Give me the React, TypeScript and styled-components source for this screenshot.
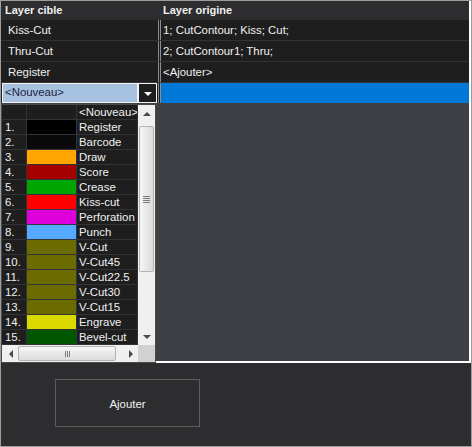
import styled, { createGlobalStyle } from "styled-components";

const GlobalStyle = createGlobalStyle`
  html, body {
    margin: 0;
    padding: 0;
    background: #2d2d30;
  }
  * {
    box-sizing: border-box;
  }
`;

const Window = styled.div`
  width: 472px;
  height: 447px;
  border: 1px solid #9d9d9d;
  background-color: #2d2d30;
  display: flex;
  flex-direction: column;
  font-family: "Liberation Sans", Arial, sans-serif;
  font-size: 11px;
  color: #f0f0f0;
  overflow: hidden;
`;

const GridPanel = styled.div`
  position: relative;
  height: 362px;
  flex-shrink: 0;
  background-color: #3f3f46;
  border-right: 2px solid #ffffff;
  border-bottom: 2px solid #ffffff;
`;

const HeaderRow = styled.div`
  display: grid;
  grid-template-columns: 157px 1fr;
  height: 19px;
  background-color: #2d2d30;
  font-weight: bold;
  span {
    padding-left: 4px;
    line-height: 19px;
  }
  span:last-child {
    padding-left: 5px;
  }
`;

const Row = styled.div`
  display: grid;
  grid-template-columns: 157px 3px 1fr;
  height: 21px;
  background-color: #1e1e1e;
  border-bottom: 1px solid #333337;
`;

const Cell = styled.div<{ $selected?: boolean; $indent?: number }>`
  padding-left: ${(props) => props.$indent ?? 7}px;
  line-height: 20px;
  font-size: 11.4px;
  white-space: nowrap;
  overflow: hidden;
  background-color: ${(props) => (props.$selected ? "#0078d7" : "transparent")};
`;

const Splitter = styled.div`
  border-left: 1px solid #8c8c8c;
  border-right: 1px solid #8c8c8c;
  background-color: #1e1e1e;
`;

const NewRow = styled(Row)`
  height: 20px;
  border-bottom: none;
`;

const Combo = styled.div`
  display: flex;
  padding: 0 1px 0 1px;
  height: 20px;
`;

const ComboText = styled.div`
  flex: 1;
  background-color: #a6c2e0;
  border: 1px solid #f4f4f4;
  color: #1c2340;
  line-height: 17px;
  font-size: 11.4px;
  padding-left: 2px;
`;

const ComboButton = styled.div`
  width: 19px;
  background-color: #1e1e1e;
  border: 1px solid #f4f4f4;
  display: flex;
  align-items: center;
  justify-content: center;
  &::after {
    content: "";
    border-left: 4px solid transparent;
    border-right: 4px solid transparent;
    border-top: 4px solid #ffffff;
    margin-top: 1px;
  }
`;

const DropList = styled.div`
  position: absolute;
  left: 0;
  top: 103px;
  width: 155px;
  height: 259px;
  border: 1px solid #4a4a4a;
  background-color: #1e1e1e;
  display: grid;
  grid-template-columns: 136px 17px;
  grid-template-rows: 240px 17px;
  z-index: 2;
`;

const Items = styled.div`
  display: flex;
  flex-direction: column;
  overflow: hidden;
`;

const Item = styled.div`
  display: grid;
  grid-template-columns: 25px 50px 1fr;
  height: 15px;
  flex-shrink: 0;
`;

const ItemCell = styled.div<{ $pad?: number }>`
  border-right: 1px solid #333337;
  border-bottom: 1px solid #333337;
  padding-left: ${(props) => props.$pad ?? 0}px;
  padding-top: 1px;
  line-height: 13px;
  font-size: 11.4px;
  white-space: nowrap;
  overflow: hidden;
`;

const Swatch = styled.div<{ $color: string }>`
  border-right: 1px solid #333337;
  border-bottom: 1px solid #333337;
  background-color: ${(props) => props.$color};
`;

const VScroll = styled.div`
  background-color: #f0f0f0;
  display: flex;
  flex-direction: column;
  align-items: center;
  padding: 0 1px;
`;

const Arrow = styled.div<{ $dir: "up" | "down" | "left" | "right" }>`
  width: 15px;
  height: 17px;
  flex-shrink: 0;
  display: flex;
  align-items: center;
  justify-content: center;
  &::after {
    content: "";
    ${(props) =>
      props.$dir === "up"
        ? "border-left: 4px solid transparent; border-right: 4px solid transparent; border-bottom: 4px solid #4a4a4a;"
        : props.$dir === "down"
        ? "border-left: 4px solid transparent; border-right: 4px solid transparent; border-top: 4px solid #4a4a4a;"
        : props.$dir === "left"
        ? "border-top: 4px solid transparent; border-bottom: 4px solid transparent; border-right: 4px solid #4a4a4a;"
        : "border-top: 4px solid transparent; border-bottom: 4px solid transparent; border-left: 4px solid #4a4a4a;"}
  }
`;

const Track = styled.div<{ $horizontal?: boolean }>`
  flex: 1;
  display: flex;
  flex-direction: ${(props) => (props.$horizontal ? "row" : "column")};
  align-self: stretch;
  padding: ${(props) => (props.$horizontal ? "1px 0" : "4px 0 0 0")};
`;

const Thumb = styled.div<{ $horizontal?: boolean }>`
  ${(props) =>
    props.$horizontal
      ? "width: 98px; height: 15px; background: linear-gradient(#f6f6f6, #dcdcdc);"
      : "height: 146px; width: 15px; background: linear-gradient(90deg, #f6f6f6, #dadada);"}
  border: 1px solid #b4b4b4;
  border-radius: 2px;
  display: flex;
  align-items: center;
  justify-content: center;
`;

const Grip = styled.div<{ $horizontal?: boolean }>`
  display: flex;
  flex-direction: ${(props) => (props.$horizontal ? "row" : "column")};
  gap: 1px;
  span {
    display: block;
    background-color: #7a7a7a;
    ${(props) => (props.$horizontal ? "width: 1px; height: 6px;" : "height: 1px; width: 7px;")}
  }
`;

const HScroll = styled.div`
  background-color: #f0f0f0;
  display: flex;
  align-items: center;
  padding-left: 1px;
`;

const Corner = styled.div`
  background-color: #d2d2d2;
`;

const BottomPanel = styled.div`
  flex: 1;
  padding: 16px 0 0 54px;
`;

const AddButton = styled.div`
  width: 145px;
  height: 48px;
  border: 1px solid #5c5c5c;
  display: flex;
  align-items: center;
  justify-content: center;
  color: #f0f0f0;
  font-size: 11.4px;
  padding-top: 1px;
`;

const layers = [
  { name: "Register", color: "#000000" },
  { name: "Barcode", color: "#0a0a0a" },
  { name: "Draw", color: "#ffa500" },
  { name: "Score", color: "#a50000" },
  { name: "Crease", color: "#00a500" },
  { name: "Kiss-cut", color: "#ff0000" },
  { name: "Perforation", color: "#dd00dd" },
  { name: "Punch", color: "#55aaff" },
  { name: "V-Cut", color: "#6b6b00" },
  { name: "V-Cut45", color: "#6b6b00" },
  { name: "V-Cut22.5", color: "#6b6b00" },
  { name: "V-Cut30", color: "#6b6b00" },
  { name: "V-Cut15", color: "#6b6b00" },
  { name: "Engrave", color: "#d9d900" },
  { name: "Bevel-cut", color: "#005700" },
];

const mappings = [
  { target: "Kiss-Cut", source: "1; CutContour; Kiss; Cut;" },
  { target: "Thru-Cut", source: "2; CutContour1; Thru;" },
  { target: "Register", source: "<Ajouter>" },
];

function App() {
  return (
    <Window>
      <GlobalStyle />
      <GridPanel>
        <HeaderRow>
          <span>Layer cible</span>
          <span>Layer origine</span>
        </HeaderRow>
        {mappings.map((m) => (
          <Row key={m.target}>
            <Cell>{m.target}</Cell>
            <Splitter />
            <Cell $indent={2}>{m.source}</Cell>
          </Row>
        ))}
        <NewRow>
          <Combo>
            <ComboText>&lt;Nouveau&gt;</ComboText>
            <ComboButton />
          </Combo>
          <Splitter />
          <Cell $selected />
        </NewRow>

        {/* open dropdown of the combo, lies over the grid */}
        <DropList>
          <Items>
            <Item>
              <ItemCell />
              <ItemCell />
              <ItemCell $pad={2}>&lt;Nouveau&gt;</ItemCell>
            </Item>
            {layers.map((l, i) => (
              <Item key={l.name}>
                <ItemCell $pad={3}>{i + 1}.</ItemCell>
                <Swatch $color={l.color} />
                <ItemCell $pad={2}>{l.name}</ItemCell>
              </Item>
            ))}
          </Items>
          <VScroll>
            <Arrow $dir="up" />
            <Track>
              <Thumb>
                <Grip>
                  <span />
                  <span />
                  <span />
                  <span />
                </Grip>
              </Thumb>
            </Track>
            <Arrow $dir="down" />
          </VScroll>
          <HScroll>
            <Arrow $dir="left" />
            <Track $horizontal>
              <Thumb $horizontal>
                <Grip $horizontal>
                  <span />
                  <span />
                  <span />
                </Grip>
              </Thumb>
            </Track>
            <Arrow $dir="right" />
          </HScroll>
          <Corner />
        </DropList>
      </GridPanel>
      <BottomPanel>
        <AddButton>Ajouter</AddButton>
      </BottomPanel>
    </Window>
  );
}

export default App;
